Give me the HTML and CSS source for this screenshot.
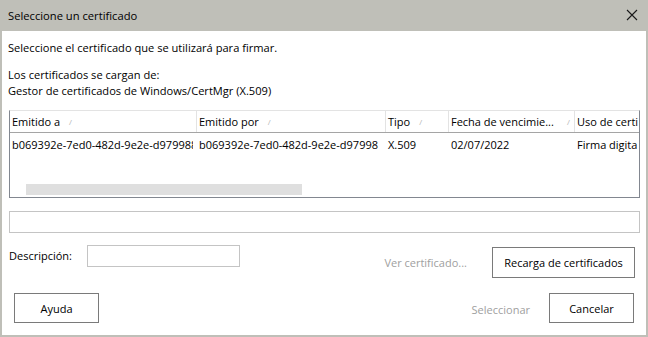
FILE: index.html
```html
<!DOCTYPE html>
<html lang="es">
<head>
<meta charset="utf-8">
<title>Seleccione un certificado</title>
<link rel="stylesheet" href="styles.css">
</head>
<body>
<div class="window">
  <div class="titlebar">
    <span class="title">Seleccione un certificado</span>
    <svg class="close" width="12" height="12" viewBox="0 0 12 12"><path d="M1 1 L11 11 M11 1 L1 11" stroke="#1a1a1a" stroke-width="1.1" fill="none"/></svg>
  </div>
  <div class="content">
    <p class="intro">Seleccione el certificado que se utilizará para firmar.</p>
    <p class="source">Los certificados se cargan de:<br>Gestor de certificados de Windows/CertMgr (X.509)</p>
    <div class="list">
      <div class="header">
        <div class="col"><span class="htext">Emitido a</span><span class="sort">/</span></div>
        <div class="col"><span class="htext">Emitido por</span><span class="sort">/</span></div>
        <div class="col"><span class="htext">Tipo</span><span class="sort">/</span></div>
        <div class="col"><span class="htext">Fecha de vencimie...</span><span class="sort sort-end">/</span></div>
        <div class="col last"><span class="htext">Uso de certificado</span></div>
      </div>
      <div class="body">
        <div class="row">
          <div class="cell">b069392e-7ed0-482d-9e2e-d979988c0b1a</div>
          <div class="cell">b069392e-7ed0-482d-9e2e-d97998</div>
          <div class="cell">X.509</div>
          <div class="cell">02/07/2022</div>
          <div class="cell last">Firma digital</div>
        </div>
        <div class="hscroll"><div class="thumb"></div></div>
      </div>
    </div>
    <div class="field"></div>
    <div class="desc-row">
      <span class="label">Descripción:</span>
      <div class="input"></div>
      <span class="disabled ver">Ver certificado...</span>
      <div class="btn recarga">Recarga de certificados</div>
    </div>
    <div class="footer">
      <div class="btn small">Ayuda</div>
      <span class="disabled sel">Seleccionar</span>
      <div class="btn small">Cancelar</div>
    </div>
  </div>
</div>
</body>
</html>
```
FILE: styles.css
```css
* { box-sizing: border-box; }
html, body { margin: 0; padding: 0; }
body {
  width: 648px;
  height: 337px;
  overflow: hidden;
  font-family: "Open Sans", "Noto Sans", sans-serif;
  font-size: 11px;
  color: #000;
  background: #bfbfb8;
}
.window {
  display: flex;
  flex-direction: column;
  height: 337px;
}
.titlebar {
  height: 31px;
  flex: none;
  display: flex;
  align-items: center;
  justify-content: space-between;
  padding: 0 10px 1px 8px;
  background: #bfbfb8;
}
.title { font-size: 11.2px; }
.close { display: block; }
.content {
  flex: 1;
  margin: 0 2px 2px 2px;
  background: #fff;
  padding: 9px 6px 0 7px;
  display: flex;
  flex-direction: column;
}
p { margin: 0; line-height: 16px; font-size: 11.1px; }
.intro { margin-left: -1px; }
.source { margin: 11px 0 0 -1px; }
.list {
  margin-top: 11px;
  height: 88px;
  border: 1px solid #828790;
  border-top-color: #e3e3e3;
  display: flex;
  flex-direction: column;
}
.header, .row {
  display: grid;
  grid-template-columns: 187px 189px 63px 126px 1fr;
}
.header {
  height: 22px;
  border-bottom: 1px solid #a5a5a5;
}
.col {
  display: flex;
  align-items: center;
  padding-left: 2px;
  border-right: 1px solid #e3e3e3;
  overflow: hidden;
  white-space: nowrap;
}
.col.last { border-right: none; margin-right: 1px; }
.sort {
  color: #b5b5b5;
  font-size: 8px;
  margin-left: 9px;
}
.sort-end { margin-left: auto; margin-right: 4px; }
.body {
  flex: 1;
  display: flex;
  flex-direction: column;
}
.row { height: 22px; align-items: center; }
.cell {
  padding-left: 2px;
  margin-right: 4px;
  white-space: nowrap;
  overflow: hidden;
}
.cell.last { margin-right: 2px; }
.hscroll {
  margin-top: auto;
  height: 11px;
  margin-bottom: 2px;
  padding-left: 16px;
}
.thumb {
  width: 276px;
  height: 11px;
  background: #dfdfdf;
}
.field {
  margin-top: 13px;
  height: 22px;
  border: 1px solid #c4c4c4;
}
.desc-row {
  margin-top: 12px;
  display: flex;
  align-items: flex-start;
}
.label {
  line-height: 22px;
  width: 78px;
}
.input {
  width: 153px;
  height: 22px;
  border: 1px solid #c4c4c4;
}
.disabled { color: #a0a0a0; }
.ver {
  margin-left: auto;
  margin-top: 2px;
  line-height: 31px;
  margin-right: 25px;
}
.btn {
  display: flex;
  align-items: center;
  justify-content: center;
  border: 1px solid #7a7a7a;
  background: #fff;
}
.recarga {
  margin-top: 2px;
  width: 143px;
  height: 31px;
  margin-right: 5px;
}
.footer {
  margin-top: 15px;
  display: flex;
  align-items: center;
  padding: 0 6px 0 5px;
}
.small { width: 85px; height: 30px; }
.sel { margin-left: auto; margin-right: 19px; margin-top: 2px; }
```
